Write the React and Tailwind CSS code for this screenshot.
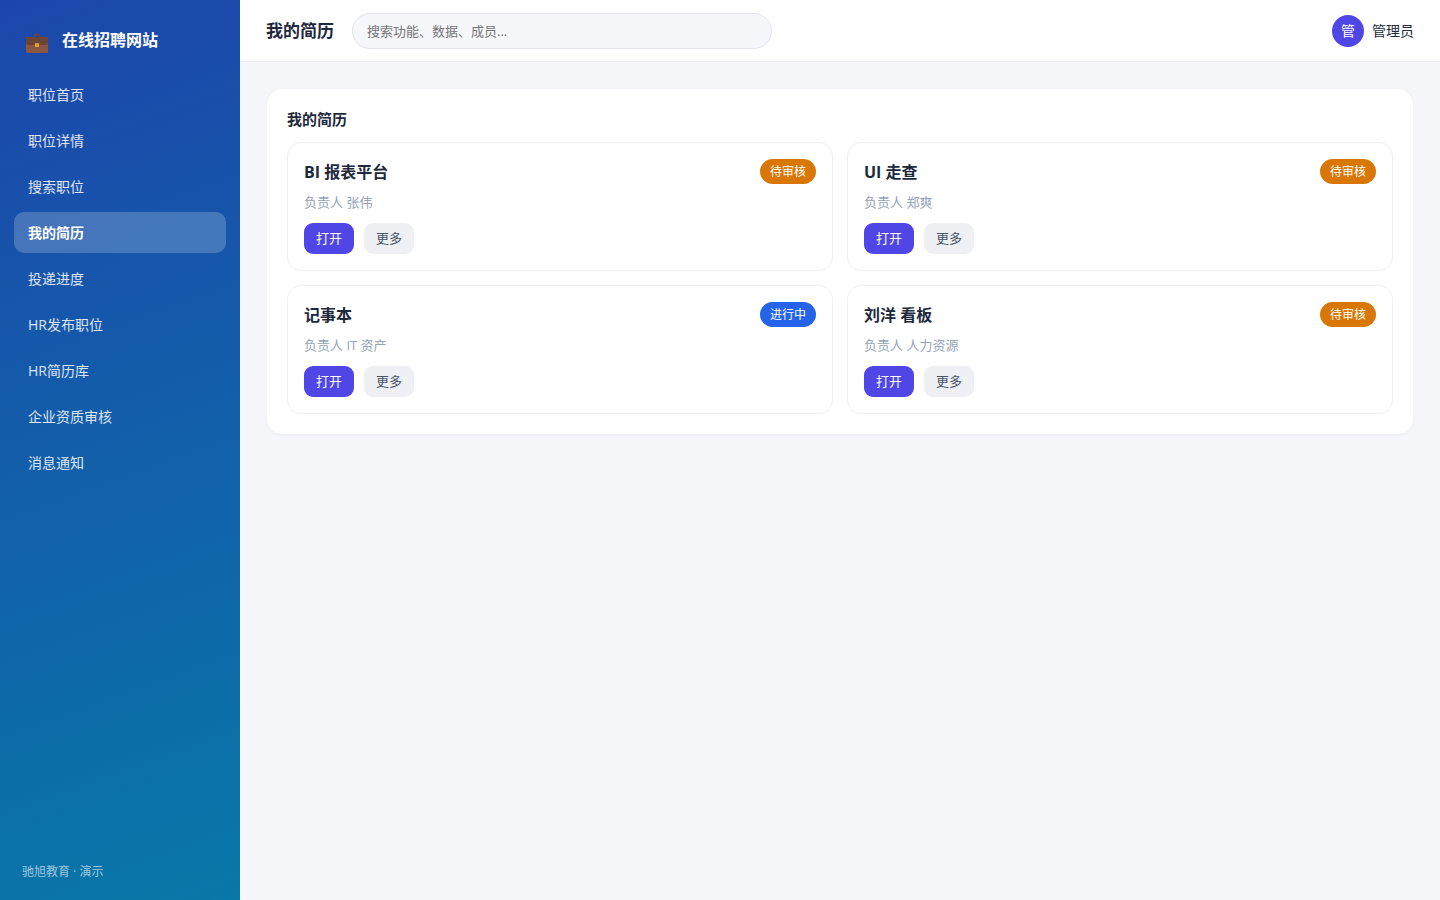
import React from "react";

const navItems = [
  "职位首页",
  "职位详情",
  "搜索职位",
  "我的简历",
  "投递进度",
  "HR发布职位",
  "HR简历库",
  "企业资质审核",
  "消息通知",
];

const resumes = [
  { title: "BI 报表平台", owner: "张伟", status: "待审核" },
  { title: "UI 走查", owner: "郑爽", status: "待审核" },
  { title: "记事本", owner: "IT 资产", status: "进行中" },
  { title: "刘洋 看板", owner: "人力资源", status: "待审核" },
];

const statusColors = {
  待审核: "bg-[#d97706]",
  进行中: "bg-[#2563eb]",
};

function BriefcaseIcon() {
  return (
    <svg width="22" height="20" viewBox="0 0 22 20" aria-hidden="true">
      <path d="M7.500 4.500C8.500 2 9.500 1.200 11 1.200s2.500.8 3.500 3.300" fill="none" stroke="#6d4534" strokeWidth="1.500" />
      <path d="M0 9h22v10q0 1-1 1H2q-2 0-2-2z" fill="#8d5642" />
      <path d="M1 4h20q1 0 1 1v5q0 2-2 2H2q-2 0-2-2V5q0-1 1-1z" fill="#6d4534" />
      <rect x="9" y="10" width="4" height="4" fill="#e59a35" />
      <rect x="9" y="10" width="4" height="1" fill="#c98a45" />
    </svg>
  );
}

function Sidebar() {
  return (
    <aside className="w-60 shrink-0 flex flex-col px-3.5 py-5 text-white bg-[linear-gradient(160deg,#1d46ac,#0878a8)]">
      <div className="flex items-center gap-3.5 h-10 px-3 mb-3.5">
        <span className="pt-1.5">
          <BriefcaseIcon />
        </span>
        <span className="text-base font-bold">在线招聘网站</span>
      </div>
      <nav className="flex flex-col gap-[5px]">
        {navItems.map((item) => (
          <a
            key={item}
            href="#"
            className={
              item === "我的简历"
                ? "h-[41px] px-3.5 flex items-center rounded-[10px] text-sm font-bold bg-white/20"
                : "h-[41px] px-3.5 flex items-center rounded-[10px] text-sm text-white/85"
            }
          >
            {item}
          </a>
        ))}
      </nav>
      <div className="mt-auto px-2 text-xs leading-4 text-white/60">驰旭教育 · 演示</div>
    </aside>
  );
}

function Header() {
  return (
    <header className="h-[62px] shrink-0 flex items-center px-[26px] bg-white border-b border-[#ebedf2]">
      <h1 className="text-[17px] font-bold">我的简历</h1>
      <input
        type="search"
        aria-label="搜索"
        placeholder="搜索功能、数据、成员..."
        className="ml-[18px] w-[420px] h-9 px-3.5 rounded-full border border-[#e2e5ee] bg-[#f5f7fb] text-[13px] placeholder:text-[#757575]"
      />
      <div className="ml-auto flex items-center gap-2 text-sm">
        <span className="w-8 h-8 rounded-full bg-[#4f46e5] text-white flex items-center justify-center">
          管
        </span>
        <span>管理员</span>
      </div>
    </header>
  );
}

function ResumeCard({ resume }) {
  return (
    <article className="p-4 rounded-[14px] border border-[#eeeff2] bg-white">
      <div className="flex items-center justify-between">
        <h3 className="text-base leading-6 font-bold">{resume.title}</h3>
        <span
          className={`h-[25px] px-2.5 flex items-center rounded-full text-xs text-white ${statusColors[resume.status]}`}
        >
          {resume.status}
        </span>
      </div>
      <p className="mt-2 text-[13px] leading-5 text-[#94a3b8]">负责人 {resume.owner}</p>
      <div className="mt-[11px] flex gap-2.5 text-[13px]">
        <button type="button" className="h-[31px] px-3 rounded-[9px] bg-[#4f46e5] text-white">
          打开
        </button>
        <button type="button" className="h-[31px] px-3 rounded-[9px] bg-[#eef0f4] text-[#475569]">
          更多
        </button>
      </div>
    </article>
  );
}

export default function App() {
  return (
    <div className="min-h-screen flex bg-[#f5f7fb] text-[#1e293b] font-['Open_Sans','Noto_Sans_CJK_SC',sans-serif]">
      <Sidebar />
      <div className="flex-1 min-w-0 flex flex-col">
        <Header />
        <main className="p-[26px]">
          <section className="p-5 rounded-2xl bg-white border border-[#f0f2f6] shadow-[0_1px_3px_rgba(15,23,42,0.04)]">
            <h2 className="mb-[13px] text-[15px] leading-5 font-bold">我的简历</h2>
            <div className="grid grid-cols-2 gap-3.5">
              {resumes.map((resume) => (
                <ResumeCard key={resume.title} resume={resume} />
              ))}
            </div>
          </section>
        </main>
      </div>
    </div>
  );
}
